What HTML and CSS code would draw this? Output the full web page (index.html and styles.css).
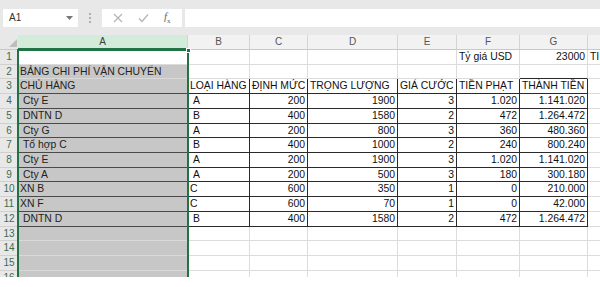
FILE: index.html
```html
<!DOCTYPE html>
<html lang="vi">
<head>
<meta charset="utf-8">
<link rel="stylesheet" href="styles.css">
</head>
<body>
<div class="app">
  <div class="fbar">
    <div class="namebox"><span>A1</span><svg class="caret" width="7" height="4" viewBox="0 0 7 4"><path d="M0 0H7L3.5 4Z" fill="#777"/></svg></div>
    <div class="dots"><span></span><span></span><span></span></div>
    <div class="fxbox">
      <svg class="ico" width="10" height="10" viewBox="0 0 10 10"><path d="M1 1L9 9M9 1L1 9" stroke="#b4b4b4" stroke-width="1.2" fill="none"/></svg>
      <svg class="ico" width="11" height="10" viewBox="0 0 11 10"><path d="M1 5.5L4 8.5L10 1.5" stroke="#b4b4b4" stroke-width="1.2" fill="none"/></svg>
      <span class="fx"><i>f</i><sub>x</sub></span>
    </div>
    <div class="finput"></div>
  </div>
  <div class="sheetwrap">
    <div class="sheet">
      <div class="corner"><svg width="8" height="8" viewBox="0 0 8 8"><path d="M8 0V8H0Z" fill="#bdbdbd"/></svg></div>
      <div class="ch sel">A</div><div class="ch">B</div><div class="ch">C</div><div class="ch">D</div><div class="ch">E</div><div class="ch">F</div><div class="ch">G</div><div class="ch last"></div>

      <div class="rh">1</div><div class="c a1"></div><div class="c"></div><div class="c"></div><div class="c"></div><div class="c"></div><div class="c">Tỷ giá USD</div><div class="c r">23000</div><div class="c">TI</div>

      <div class="rh">2</div><div class="c a">BẢNG CHI PHÍ VẬN CHUYỂN</div><div class="c"></div><div class="c"></div><div class="c"></div><div class="c"></div><div class="c"></div><div class="c bb"></div><div class="c"></div>

      <div class="rh">3</div><div class="c a ab">CHỦ HÀNG</div><div class="c t">LOẠI HÀNG</div><div class="c t">ĐỊNH MỨC</div><div class="c t">TRỌNG LƯỢNG</div><div class="c t">GIÁ CƯỚC</div><div class="c t">TIỀN PHẠT</div><div class="c t">THÀNH TIỀN</div><div class="c"></div>

      <div class="rh">4</div><div class="c a ab in">Cty E</div><div class="c t in">A</div><div class="c t r">200</div><div class="c t r">1900</div><div class="c t r">3</div><div class="c t r">1.020</div><div class="c t r">1.141.020</div><div class="c"></div>

      <div class="rh">5</div><div class="c a ab in">DNTN D</div><div class="c t in">B</div><div class="c t r">400</div><div class="c t r">1580</div><div class="c t r">2</div><div class="c t r">472</div><div class="c t r">1.264.472</div><div class="c"></div>

      <div class="rh">6</div><div class="c a ab in">Cty G</div><div class="c t in">A</div><div class="c t r">200</div><div class="c t r">800</div><div class="c t r">3</div><div class="c t r">360</div><div class="c t r">480.360</div><div class="c"></div>

      <div class="rh">7</div><div class="c a ab in">Tổ hợp C</div><div class="c t in">B</div><div class="c t r">400</div><div class="c t r">1000</div><div class="c t r">2</div><div class="c t r">240</div><div class="c t r">800.240</div><div class="c"></div>

      <div class="rh">8</div><div class="c a ab in">Cty E</div><div class="c t in">A</div><div class="c t r">200</div><div class="c t r">1900</div><div class="c t r">3</div><div class="c t r">1.020</div><div class="c t r">1.141.020</div><div class="c"></div>

      <div class="rh">9</div><div class="c a ab in">Cty A</div><div class="c t in">A</div><div class="c t r">200</div><div class="c t r">500</div><div class="c t r">3</div><div class="c t r">180</div><div class="c t r">300.180</div><div class="c"></div>

      <div class="rh">10</div><div class="c a ab">XN B</div><div class="c t">C</div><div class="c t r">600</div><div class="c t r">350</div><div class="c t r">1</div><div class="c t r">0</div><div class="c t r">210.000</div><div class="c"></div>

      <div class="rh">11</div><div class="c a ab">XN F</div><div class="c t">C</div><div class="c t r">600</div><div class="c t r">70</div><div class="c t r">1</div><div class="c t r">0</div><div class="c t r">42.000</div><div class="c"></div>

      <div class="rh">12</div><div class="c a ab in">DNTN D</div><div class="c t in">B</div><div class="c t r">400</div><div class="c t r">1580</div><div class="c t r">2</div><div class="c t r">472</div><div class="c t r">1.264.472</div><div class="c"></div>

      <div class="rh">13</div><div class="c a"></div><div class="c"></div><div class="c"></div><div class="c"></div><div class="c"></div><div class="c"></div><div class="c"></div><div class="c"></div>

      <div class="rh">14</div><div class="c a"></div><div class="c"></div><div class="c"></div><div class="c"></div><div class="c"></div><div class="c"></div><div class="c"></div><div class="c"></div>

      <div class="rh">15</div><div class="c a"></div><div class="c"></div><div class="c"></div><div class="c"></div><div class="c"></div><div class="c"></div><div class="c"></div><div class="c"></div>

      <div class="rh">16</div><div class="c a"></div><div class="c"></div><div class="c"></div><div class="c"></div><div class="c"></div><div class="c"></div><div class="c"></div><div class="c"></div>
    </div>
    <div class="selbox"><span class="handle"></span></div>
  </div>
</div>
</body>
</html>
```

FILE: styles.css
```css
* { box-sizing: border-box; }
body {
  margin: 0;
  background: #fff;
  font-family: "Liberation Sans", Arial, sans-serif;
}
.app {
  width: 600px;
  height: 277px;
  overflow: hidden;
  background: #fff;
}
.fbar {
  height: 35px;
  background: #e8e8e8;
  display: flex;
  align-items: center;
  padding-left: 3px;
}
.namebox {
  width: 75px;
  height: 18px;
  background: #fff;
  display: flex;
  align-items: center;
  justify-content: space-between;
  padding: 0 5px 0 6px;
  font-size: 10px;
  color: #333;
}
.dots {
  width: 24px;
  display: flex;
  flex-direction: column;
  align-items: center;
  gap: 2px;
}
.dots span {
  width: 2px;
  height: 2px;
  background: #b0b0b0;
}
.fxbox {
  width: 80px;
  height: 18px;
  background: #fff;
  display: flex;
  align-items: center;
  justify-content: space-around;
  padding: 0 4px;
}
.fx {
  font-family: "Liberation Serif", serif;
  font-size: 11px;
  color: #666;
}
.fx sub { font-size: 7px; }
.finput {
  flex: 1;
  height: 18px;
  margin-left: 3px;
  background: #fff;
}
.sheetwrap {
  position: relative;
}
.sheet {
  display: grid;
  grid-template-columns: 18px 170px 62px 58px 90px 59px 63px 68px 40px;
  grid-template-rows: 15px;
  grid-auto-rows: 14.73px;
  font-size: 10.4px;
  color: #111;
}
.corner {
  background: #e8e8e8;
  border-bottom: 1px solid #c8c8c8;
  display: flex;
  align-items: flex-end;
  justify-content: flex-end;
  padding: 0 1px 2px 0;
}
.ch {
  background: #f2f2f2;
  border-right: 1px solid #d4d4d4;
  border-bottom: 1px solid #c8c8c8;
  text-align: center;
  font-size: 10px;
  line-height: 14px;
  color: #555;
}
.ch.sel {
  background: #d3ebdb;
  border-bottom: 2px solid #217346;
  color: #3c3c3c;
}
.rh {
  background: #e8e8e8;
  border-bottom: 1px solid #d0d0d0;
  font-size: 10px;
  color: #3f6b50;
  text-align: center;
  line-height: 14px;
}
.c {
  border-right: 1px solid #dcdcdc;
  border-bottom: 1px solid #dcdcdc;
  padding: 0 2px;
  line-height: 14px;
  white-space: nowrap;
  overflow: hidden;
}
.c.r { text-align: right; }
.c.in { padding-left: 5px; }
.c.a {
  background: #c7c7c7;
  border-bottom-color: #d9d9d9;
  color: #222;
}
.c.a.ab { border-bottom-color: #4a4a4a; }
.c.t {
  border-right-color: #2a2a2a;
  border-bottom-color: #2a2a2a;
}
.c.bb { border-bottom-color: #2a2a2a; }
.selbox {
  position: absolute;
  left: 17px;
  top: 14px;
  width: 172px;
  height: 300px;
  border: 2px solid #217346;
}
.handle {
  position: absolute;
  right: -4px;
  top: -3px;
  width: 5px;
  height: 5px;
  background: #217346;
  border: 1px solid #fff;
}
```
